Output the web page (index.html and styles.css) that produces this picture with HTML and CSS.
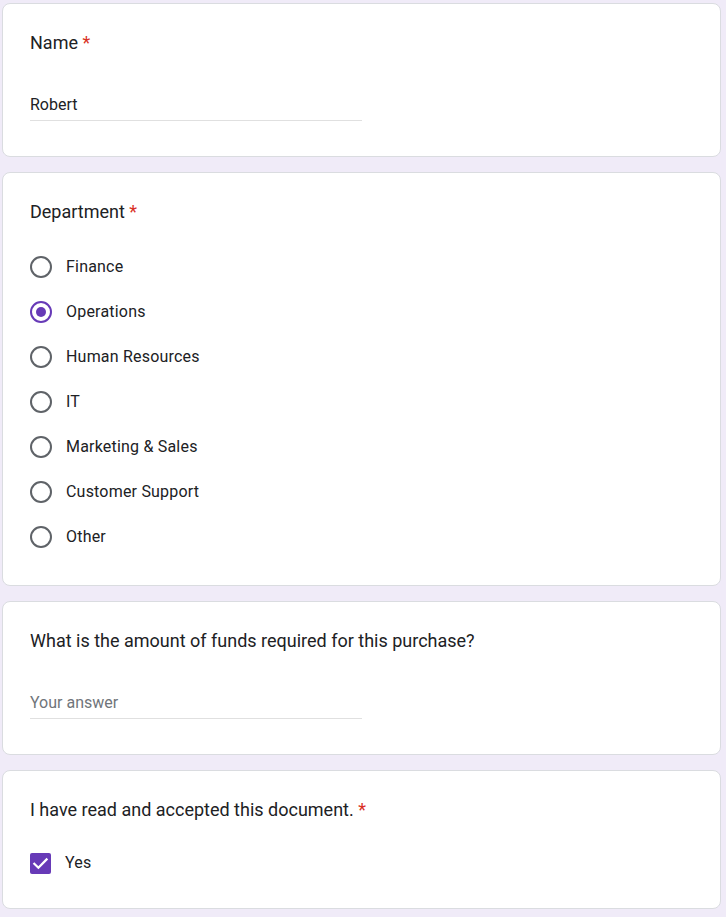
FILE: index.html
```html
<!DOCTYPE html>
<html lang="en">
<head>
<meta charset="utf-8">
<title>Form</title>
<link rel="stylesheet" href="styles.css">
</head>
<body>
<main class="form">
  <section class="card card-name">
    <div class="q-title">Name <span class="req">*</span></div>
    <div class="answer"><span class="value">Robert</span></div>
  </section>

  <section class="card card-dept">
    <div class="q-title">Department <span class="req">*</span></div>
    <ul class="options">
      <li class="option"><span class="radio"></span><span class="label">Finance</span></li>
      <li class="option"><span class="radio checked"></span><span class="label">Operations</span></li>
      <li class="option"><span class="radio"></span><span class="label">Human Resources</span></li>
      <li class="option"><span class="radio"></span><span class="label">IT</span></li>
      <li class="option"><span class="radio"></span><span class="label">Marketing &amp; Sales</span></li>
      <li class="option"><span class="radio"></span><span class="label">Customer Support</span></li>
      <li class="option"><span class="radio"></span><span class="label">Other</span></li>
    </ul>
  </section>

  <section class="card card-funds">
    <div class="q-title">What is the amount of funds required for this purchase?</div>
    <div class="answer"><span class="placeholder">Your answer</span></div>
  </section>

  <section class="card card-accept">
    <div class="q-title">I have read and accepted this document. <span class="req">*</span></div>
    <div class="check-row">
      <span class="checkbox">
        <svg viewBox="0 0 21 21" width="21" height="21" aria-hidden="true">
          <path d="M4.3 10.8 L8.4 14.8 L16.6 6.4" fill="none" stroke="#fff" stroke-width="2.2" stroke-linecap="square"/>
        </svg>
      </span>
      <span class="label">Yes</span>
    </div>
  </section>
</main>
</body>
</html>
```

FILE: styles.css
```css
html, body {
  margin: 0;
  padding: 0;
}
body {
  background: #f0ebf8;
  font-family: Roboto, "Noto Sans", "Liberation Sans", sans-serif;
  color: #202124;
  width: 726px;
  height: 917px;
  overflow: hidden;
}
.form {
  display: flex;
  flex-direction: column;
  gap: 15px;
  padding: 3px 5px 0 2px;
}
.card {
  background: #fff;
  border: 1px solid #dadce0;
  border-radius: 8px;
  padding: 27px 27px 0 27px;
}
.q-title {
  font-size: 18px;
  line-height: 24px;
  letter-spacing: 0;
  color: #202124;
}
.req {
  color: #d93025;
}
.answer {
  width: 332px;
  margin-top: 38px;
  padding-bottom: 3px;
  border-bottom: 1px solid #e0e0e0;
  font-size: 16px;
  line-height: 24px;
}
.value {
  color: #202124;
}
.placeholder {
  color: #70757a;
}
.card-name {
  padding-bottom: 35px;
}
.card-funds {
  padding-bottom: 35px;
}
.options {
  list-style: none;
  margin: 20.5px 0 0 0;
  padding: 0;
}
.card-dept {
  padding-bottom: 25.5px;
}
.option {
  height: 45px;
  display: flex;
  align-items: center;
}
.radio {
  box-sizing: border-box;
  width: 22px;
  height: 22px;
  border: 2px solid #5f6368;
  border-radius: 50%;
  display: flex;
  align-items: center;
  justify-content: center;
  flex: none;
}
.radio.checked {
  border-color: #673ab7;
}
.radio.checked::after {
  content: "";
  width: 10px;
  height: 10px;
  border-radius: 50%;
  background: #673ab7;
}
.label {
  margin-left: 14px;
  font-size: 16px;
  line-height: 24px;
  letter-spacing: 0.2px;
  color: #202124;
}
.check-row {
  display: flex;
  align-items: center;
  margin-top: 29px;
  height: 24px;
}
.card-accept {
  padding-bottom: 33px;
}
.checkbox {
  width: 21px;
  height: 21px;
  background: #673ab7;
  border-radius: 2px;
  display: flex;
  align-items: center;
  justify-content: center;
  flex: none;
}
.checkbox svg {
  display: block;
}
.check-row .label {
  margin-left: 14px;
}
```
